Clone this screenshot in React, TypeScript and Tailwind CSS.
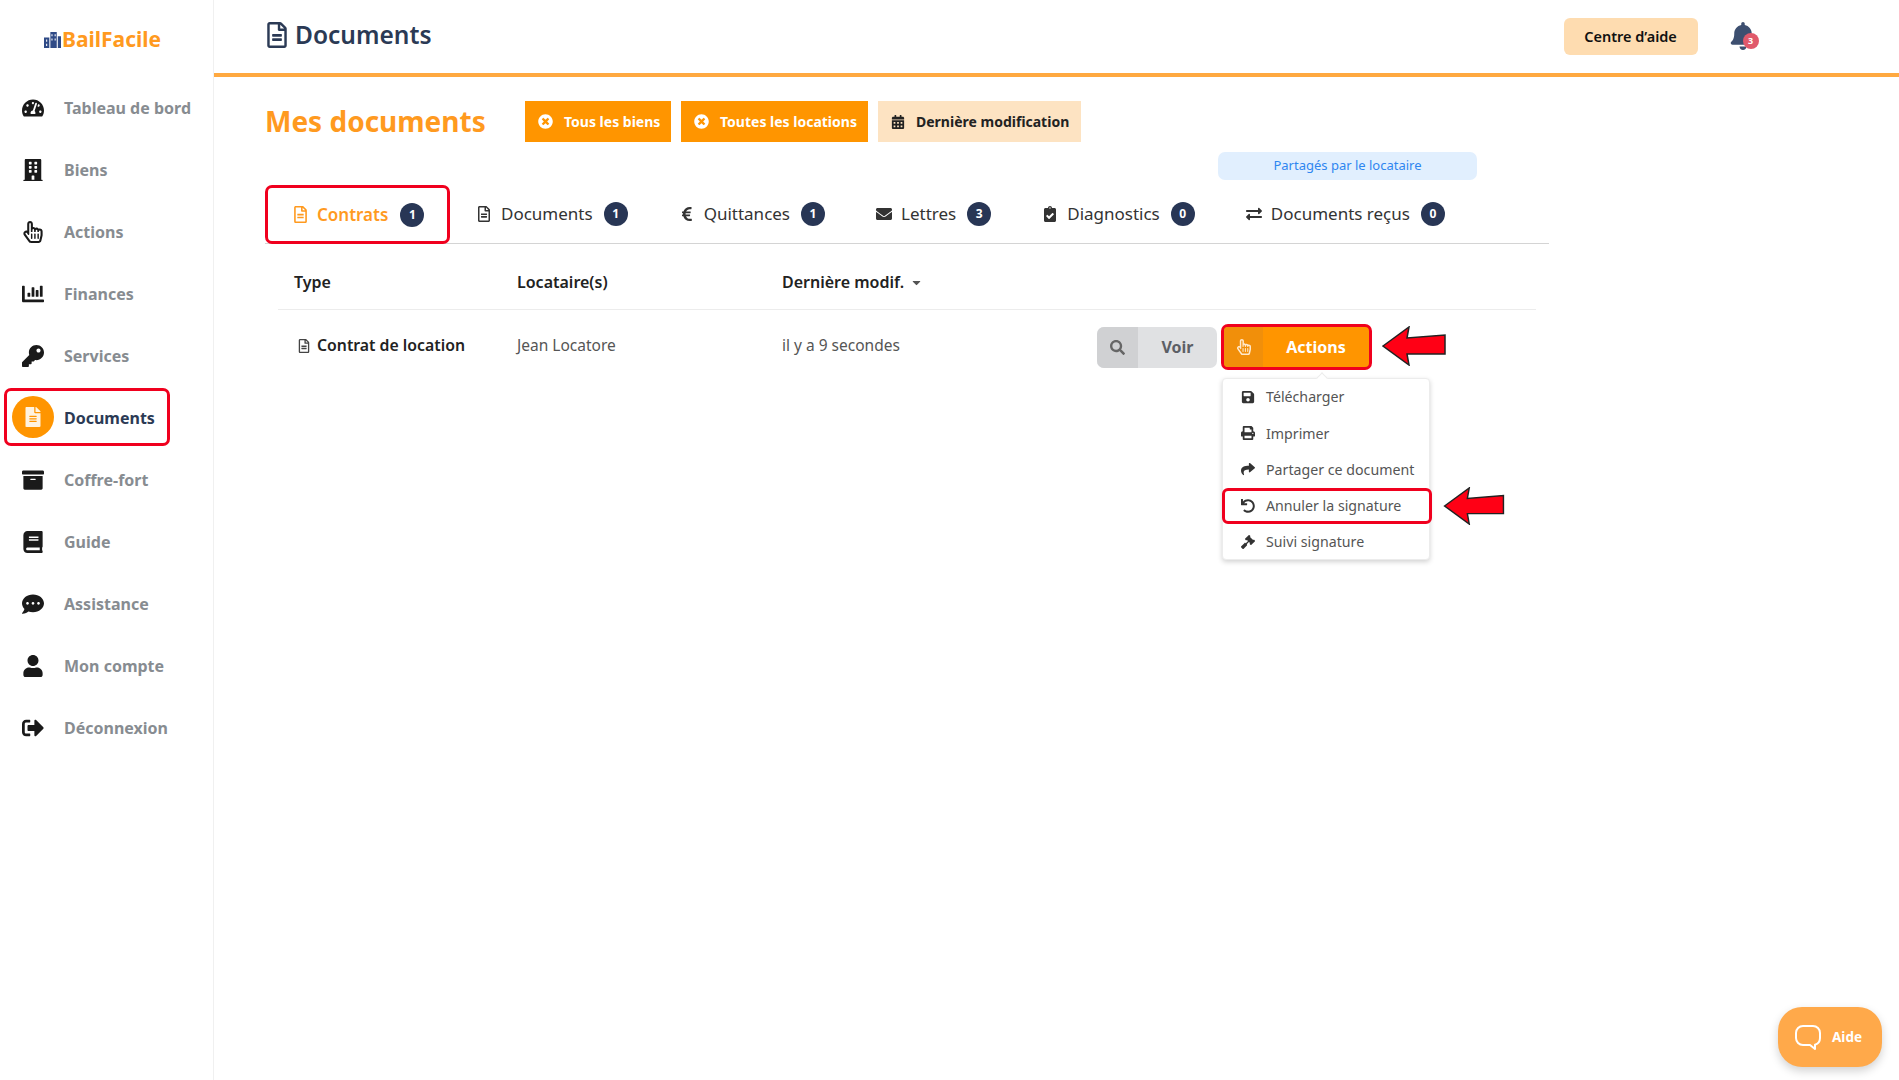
import React from "react";
import {
  FaTachometerAlt, FaBuilding, FaRegHandPointer, FaChartBar, FaKey, FaFileAlt, FaArchive, FaBook, FaCommentDots, FaUser,
  FaSignOutAlt, FaRegFileAlt, FaTimesCircle, FaCalendarAlt, FaEuroSign, FaEnvelope, FaClipboardCheck, FaExchangeAlt,
  FaSearch, FaSave, FaPrint, FaShare, FaUndo, FaGavel, FaBell, FaCaretDown,
} from "react-icons/fa";

const nav: [string, React.ComponentType<{ className?: string }>][] = [
  ["Tableau de bord", FaTachometerAlt],
  ["Biens", FaBuilding],
  ["Actions", FaRegHandPointer],
  ["Finances", FaChartBar],
  ["Services", FaKey],
  ["Documents", FaFileAlt],
  ["Coffre-fort", FaArchive],
  ["Guide", FaBook],
  ["Assistance", FaCommentDots],
  ["Mon compte", FaUser],
  ["Déconnexion", FaSignOutAlt],
];

const tabs: [string, React.ComponentType<{ className?: string }>, string][] = [
  ["Documents", FaRegFileAlt, "1"],
  ["Quittances", FaEuroSign, "1"],
  ["Lettres", FaEnvelope, "3"],
  ["Diagnostics", FaClipboardCheck, "0"],
  ["Documents reçus", FaExchangeAlt, "0"],
];

const menu: [string, React.ComponentType<{ className?: string }>][] = [
  ["Télécharger", FaSave],
  ["Imprimer", FaPrint],
  ["Partager ce document", FaShare],
  ["Annuler la signature", FaUndo],
  ["Suivi signature", FaGavel],
];

function Arrow({ className }: { className: string }) {
  return (
    <svg viewBox="0 0 64 40" className={className}>
      <polygon points="1,20 27,1 25,12 63,9 63,28 25,28 27,39" fill="#ff0015" stroke="#222" strokeWidth="1.5" />
    </svg>
  );
}

function Badge({ n }: { n: string }) {
  return (
    <span className="w-6 h-6 rounded-full bg-[#283655] text-white text-[12px] font-bold flex items-center justify-center">{n}</span>
  );
}

export default function App() {
  return (
    <div className="flex h-[1080px] w-[1899px] overflow-hidden bg-white text-[#222] font-['Noto_Sans','Liberation_Sans',sans-serif]">
      <aside className="w-[214px] shrink-0 border-r border-[#f0f0f0] pt-[26px]">
        <div className="flex items-center h-[26px] pl-[44px] gap-[1px]">
          <svg viewBox="0 0 16 16" className="w-[17px] h-[17px]">
            <path d="M0 6h5V16H0zM6 1h6v15H6zM13 5h3v11h-3z" fill="#2f4a86" />
            <path d="M7 3h1v2H7zM10 3h1v2h-1zM7 7h1v2H7zM10 7h1v2h-1zM2 8h1v2H2zM2 12h1v2H2z" fill="#fff" />
          </svg>
          <span className="text-[21px] leading-[26px] font-bold text-[#ff9a1f]">BailFacile</span>
        </div>
        <nav className="mt-[25px] flex flex-col">
          {nav.map(([label, Icon]) => {
            const active = label === "Documents";
            return (
              <div key={label} className={"relative h-[62px] flex items-center pl-[64px] text-[16px] font-bold " + (active ? "text-[#2b3a55]" : "text-[#878c91]")}>
                {active ? (
                  <>
                    <span className="absolute left-[4px] top-[1px] w-[166px] h-[58px] rounded-[7px] border-[3px] border-[#f0001e]" />
                    <span className="absolute left-[12px] top-[9px] w-[42px] h-[42px] rounded-full bg-[#ff9500] flex items-center justify-center">
                      <Icon className="text-[20px] text-[#fff3e0]" />
                    </span>
                  </>
                ) : (
                  <Icon className="absolute left-[22px] text-[22px] text-[#1a1a1a]" />
                )}
                {label}
              </div>
            );
          })}
        </nav>
      </aside>

      <main className="flex-1 min-w-0 flex flex-col">
        <header className="h-[77px] shrink-0 border-b-[4px] border-[#ffa940] flex items-center pl-[50px]">
          <FaRegFileAlt className="text-[26px] -mt-[3px] text-[#2b3a55]" />
          <h1 className="ml-[5px] -mt-[3px] text-[24.5px] font-semibold text-[#2b3a55]">Documents</h1>
          <button className="ml-[1132px] w-[134px] h-[37px] rounded-[6px] bg-[#fedcb0] text-[14.5px] font-semibold text-[#111]">Centre d’aide</button>
          <div className="relative ml-[31px] w-[30px] h-[30px]">
            <FaBell className="text-[28px] text-[#3d4f70]" />
            <span className="absolute left-[14px] top-[11px] w-[16px] h-[16px] rounded-full bg-[#e0596b] text-white text-[9px] font-bold flex items-center justify-center">3</span>
          </div>
        </header>

        <div className="pl-[51px] w-[1335px]">
          <div className="flex items-center h-[41px] mt-[24px]">
            <h2 className="w-[260px] text-[28px] font-bold text-[#ff9a1f] -mt-[2px]">Mes documents</h2>
            <button className="w-[146px] h-[41px] bg-[#ff9500] text-white text-[14px] font-bold flex items-center pl-[13px] gap-[11px]"><FaTimesCircle className="text-[15px]" />Tous les biens</button>
            <button className="ml-[10px] w-[187px] h-[41px] bg-[#ff9500] text-white text-[14px] font-bold flex items-center pl-[13px] gap-[11px]"><FaTimesCircle className="text-[15px]" />Toutes les locations</button>
            <button className="ml-[10px] w-[203px] h-[41px] bg-[#fde3c2] text-[#222] text-[14px] font-bold flex items-center pl-[13px] gap-[11px]"><FaCalendarAlt className="text-[14px]" />Dernière modification</button>
          </div>

          <div className="ml-[953px] mt-[10px] w-[259px] h-[28px] rounded-[7px] bg-[#e1effe] text-[#2f86f0] text-[13px] flex items-center justify-center">Partagés par le locataire</div>

          <div className="flex border-b border-[#d4d4d4] h-[59px] mt-[5px] text-[17px]">
            <div className="relative -mb-px flex items-center w-[185px] pl-[27px] font-semibold text-[#ff9a1f]">
              <span className="absolute inset-0 rounded-[7px] border-[3px] border-[#f0001e]" />
              <FaRegFileAlt className="text-[17px]" />
              <span className="ml-[8px] mr-[12px]">Contrats</span>
              <Badge n="1" />
            </div>
            {tabs.map(([label, Icon, n]) => (
              <div key={label} className="flex items-center pl-[26px] pr-[25px] text-[#333]">
                <Icon className="text-[16px] text-[#333]" />
                <span className="ml-[9px] mr-[11px]">{label}</span>
                <Badge n={n} />
              </div>
            ))}
          </div>

          <div className="mx-[13px]">
            <div className="flex items-center h-[66px] pt-[11px] border-b border-[#ececec] px-[16px] text-[16px] font-semibold text-[#222]">
              <span className="w-[223px]">Type</span>
              <span className="w-[265px]">Locataire(s)</span>
              <span className="flex items-center gap-[6px]">Dernière modif. <FaCaretDown className="text-[13px] text-[#555]" /></span>
            </div>
            <div className="flex items-center h-[74px] px-[16px] text-[15.5px] text-[#555]">
              <span className="w-[223px] -mt-[2px] flex items-center gap-[6px] text-[15.8px] font-semibold text-[#222] pl-[3px]"><FaRegFileAlt className="text-[14px] text-[#444]" />Contrat de location</span>
              <span className="w-[265px] -mt-[2px]">Jean Locatore</span>
              <span className="w-[315px] -mt-[2px]">il y a 9 secondes</span>
              <button className="w-[120px] h-[41px] rounded-[7px] overflow-hidden flex bg-[#e0e1e3] text-[#5c5f66] text-[16px] font-bold">
                <span className="w-[41px] h-full bg-[#d0d1d3] flex items-center justify-center"><FaSearch className="text-[15px] text-[#666]" /></span>
                <span className="flex-1 flex items-center justify-center">Voir</span>
              </button>
              <div className="relative ml-[4px]">
                <button className="w-[151px] h-[46px] rounded-[7px] border-[3px] border-[#f0001e] overflow-hidden flex bg-[#ff9500] text-white text-[16px] font-bold">
                  <span className="w-[39px] h-full bg-[#f18f0a] flex items-center justify-center"><FaRegHandPointer className="text-[16px] text-[#ffe9cc]" /></span>
                  <span className="flex-1 flex items-center justify-center">Actions</span>
                </button>
                <Arrow className="absolute left-[161px] top-[2px] w-[64px] h-[40px]" />
                <div className="absolute left-[1px] top-[54px] w-[208px] h-[182px] bg-white rounded-[4px] border border-[#ececec] shadow-[0_2px_5px_rgba(0,0,0,0.18)] text-[14.2px] text-[#555]">
                  <span className="absolute left-[95px] -top-[5px] w-[8px] h-[8px] rotate-45 bg-white border-l border-t border-[#ececec]" />
                  <div className="flex flex-col">
                    {menu.map(([label, Icon]) => (
                      <div key={label} className="relative flex items-center h-[36.2px] pl-[43px]">
                        {label === "Annuler la signature" && (
                          <>
                            <span className="absolute -left-[1px] top-0 w-[210px] h-[36px] rounded-[6px] border-[3px] border-[#f0001e]" />
                            <Arrow className="absolute left-[219px] top-[-1px] w-[64px] h-[38px]" />
                          </>
                        )}
                        <Icon className="absolute left-[18px] text-[14px] text-[#333]" />
                        {label}
                      </div>
                    ))}
                  </div>
                </div>
              </div>
            </div>
          </div>
        </div>
      </main>

      <button className="absolute left-[1778px] top-[1007px] w-[104px] h-[60px] rounded-[24px] bg-[#ffa94a] shadow-[0_4px_10px_rgba(0,0,0,0.18)] flex items-center justify-center gap-[10px] pr-[4px] text-white text-[13.5px] font-bold">
        <svg viewBox="0 0 28 28" className="w-[28px] h-[28px]" fill="none" stroke="#fff" strokeWidth="2">
          <path d="M9 3h10a7 7 0 0 1 7 7v5a7 7 0 0 1-5 6.7L21 26l-5-4H9a7 7 0 0 1-7-7v-5a7 7 0 0 1 7-7z" strokeLinejoin="round" />
        </svg>
        Aide
      </button>
    </div>
  );
}
